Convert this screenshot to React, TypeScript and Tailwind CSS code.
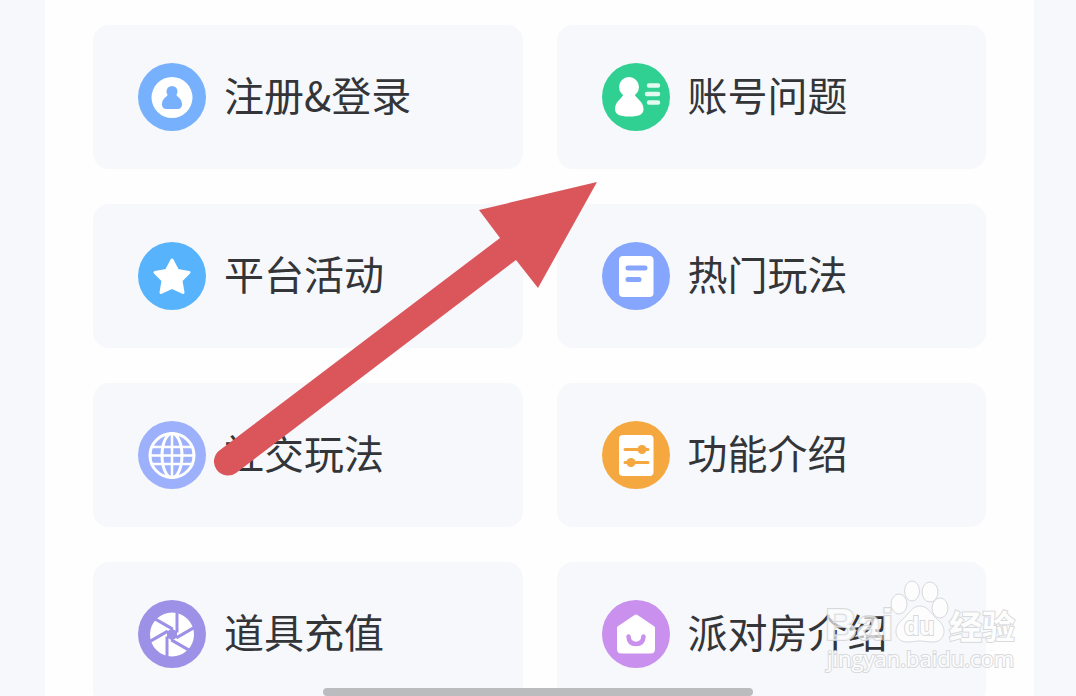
import type { ReactNode } from "react";

type Topic = {
  label: string;
  color: string;
  icon: ReactNode;
};

const topics: Topic[] = [
  {
    label: "注册&登录",
    color: "text-[#77b0fc]",
    icon: (
      <>
        <circle cx="34" cy="34.5" r="20.5" fill="#fff" />
        <circle cx="34" cy="28.5" r="5.5" fill="currentColor" />
        <path d="M30.5 29C31 34 24 34 24 41C24 44.5 25.5 46 29 46H39C42.5 46 44 44.5 44 41C44 34 37 34 37.5 29Z" fill="currentColor" />
      </>
    ),
  },
  {
    label: "账号问题",
    color: "text-[#30d092]",
    icon: (
      <>
        <circle cx="27" cy="24" r="10" fill="#fff" />
        <path d="M22 30H32C33 35 41.5 38 41.5 46C41.5 51 38 53.5 27.5 53.5C17 53.5 13 51 13 46C13 38 21 35 22 30Z" fill="#fff" />
        <path d="M47 22.5H56M45 31H56M47 39.5H56" stroke="#e2faef" strokeWidth="4.5" strokeLinecap="round" />
      </>
    ),
  },
  {
    label: "平台活动",
    color: "text-[#57b4fc]",
    icon: (
      <path
        d="M34 18L39.5 28.5L51 30.5L43 38.5L45 50.5L34 45.5L23 50.5L25 38.5L17 30.5L28.5 28.5Z"
        fill="#fff"
        stroke="#fff"
        strokeWidth="3"
        strokeLinejoin="round"
      />
    ),
  },
  {
    label: "热门玩法",
    color: "text-[#85a6fc]",
    icon: (
      <>
        <rect x="17" y="14" width="34.5" height="41" rx="4" fill="#fff" />
        <path d="M26 26H43M26 37.5H37" stroke="currentColor" strokeWidth="5" strokeLinecap="round" />
      </>
    ),
  },
  {
    label: "社交玩法",
    color: "text-[#9cb0fb]",
    icon: (
      <g fill="none" stroke="#fff" strokeWidth="3">
        <circle cx="34" cy="34.5" r="22" />
        <ellipse cx="34" cy="34.5" rx="10" ry="22" />
        <path d="M34 13V56M14 26H54M12 34.5H56M14 43H54" strokeWidth="2.5" />
      </g>
    ),
  },
  {
    label: "功能介绍",
    color: "text-[#f4a83f]",
    icon: (
      <>
        <rect x="17" y="14" width="34.5" height="41" rx="4" fill="#fff" />
        <path d="M23 28.5H46M23 41.5H46" stroke="currentColor" strokeWidth="3" strokeLinecap="round" />
        <circle cx="40" cy="28.5" r="4.5" fill="currentColor" />
        <circle cx="29" cy="41.5" r="4.5" fill="currentColor" />
      </>
    ),
  },
  {
    label: "道具充值",
    color: "text-[#9c91e6]",
    icon: (
      <g transform="translate(34 34.5)">
        <circle r="22" fill="#fff" />
        <path d="M5 -3L0 -6L-5 -3L-5 3L0 6L5 3Z" fill="currentColor" />
        {[0, 60, 120, 180, 240, 300].map((angle) => (
          <path key={angle} d="M5 -23V-2" stroke="currentColor" strokeWidth="3" transform={`rotate(${angle})`} />
        ))}
      </g>
    ),
  },
  {
    label: "派对房介绍",
    color: "text-[#c990ed]",
    icon: (
      <>
        <path
          d="M34 16.5L51 28V49Q51 51.5 48.5 51.5H19.5Q17 51.5 17 49V28Z"
          fill="#fff"
          stroke="#fff"
          strokeWidth="4"
          strokeLinejoin="round"
        />
        <path d="M26.5 36.5Q27 44 34 44Q41 44 41.5 36.5" fill="none" stroke="currentColor" strokeWidth="4.5" strokeLinecap="round" />
      </>
    ),
  },
];

const TopicCard = ({ label, color, icon }: Topic) => (
  <a href="#" className="flex h-36 items-center gap-[18px] rounded-2xl bg-[#f6f8fb] pl-[45px]">
    <svg viewBox="0 0 68 68" className={`size-[68px] shrink-0 ${color}`} aria-hidden="true">
      <circle cx="34" cy="34" r="34" fill="currentColor" />
      {icon}
    </svg>
    <span className="whitespace-nowrap pb-1.5 text-[40px] leading-none text-[#333539]">{label}</span>
  </a>
);

/* Red pointer drawn over the cards */
const Arrow = () => (
  <svg viewBox="0 0 384 294" className="pointer-events-none absolute left-[214px] top-[182px] w-[384px]" aria-hidden="true">
    <path d="M383 0L265 28L286 56L6 268A14 14 0 0 0 22 291L302 78L324 106Z" fill="#db565b" />
  </svg>
);

const Watermark = () => (
  <svg
    viewBox="0 0 200 96"
    className="pointer-events-none absolute bottom-5 right-[54px] w-[200px] opacity-85"
    fill="#fff"
    stroke="#d3d4d7"
    strokeWidth="1"
    aria-hidden="true"
  >
    <ellipse cx="77" cy="24" rx="8" ry="10" />
    <ellipse cx="90" cy="11" rx="7.5" ry="10" />
    <ellipse cx="108" cy="12" rx="8" ry="10" />
    <ellipse cx="118" cy="28" rx="8" ry="10" />
    <path d="M98 26C106 26 109 34 116 40C126 48 123 62 111 62C105 62 103 61 98 61C93 61 90 62 85 62C73 62 70 48 80 40C87 34 90 26 98 26Z" />
    <g fontWeight="700" strokeWidth="2" paintOrder="stroke">
      <text x="3" y="60" fontSize="44" fontFamily="Liberation Sans, sans-serif" fillOpacity="0.8">Bai</text>
      <text x="82" y="55" fontSize="25" fontFamily="Liberation Sans, sans-serif">du</text>
      <text x="127" y="59" fontSize="33" fontFamily="Noto Sans CJK SC, sans-serif">经验</text>
    </g>
    <text x="5" y="87" fontSize="22" fontFamily="Open Sans, sans-serif" strokeWidth="2" paintOrder="stroke">
      jingyan.baidu.com
    </text>
  </svg>
);

export default function App() {
  return (
    <div className="relative h-screen overflow-hidden bg-[#f6f8fb] pl-[45px] pr-[42px] font-['Noto_Sans_CJK_SC',sans-serif]">
      <main className="min-h-full bg-[#fefefe] px-12 pt-[25px]">
        <nav className="grid grid-cols-2 gap-x-[34px] gap-y-[35px]" aria-label="问题分类">
          {topics.map((topic) => (
            <TopicCard key={topic.label} {...topic} />
          ))}
        </nav>
      </main>

      <Arrow />
      <Watermark />
      <div className="absolute bottom-0 left-[30%] h-2 w-2/5 rounded-full bg-[#bbbcbd]" />
    </div>
  );
}
